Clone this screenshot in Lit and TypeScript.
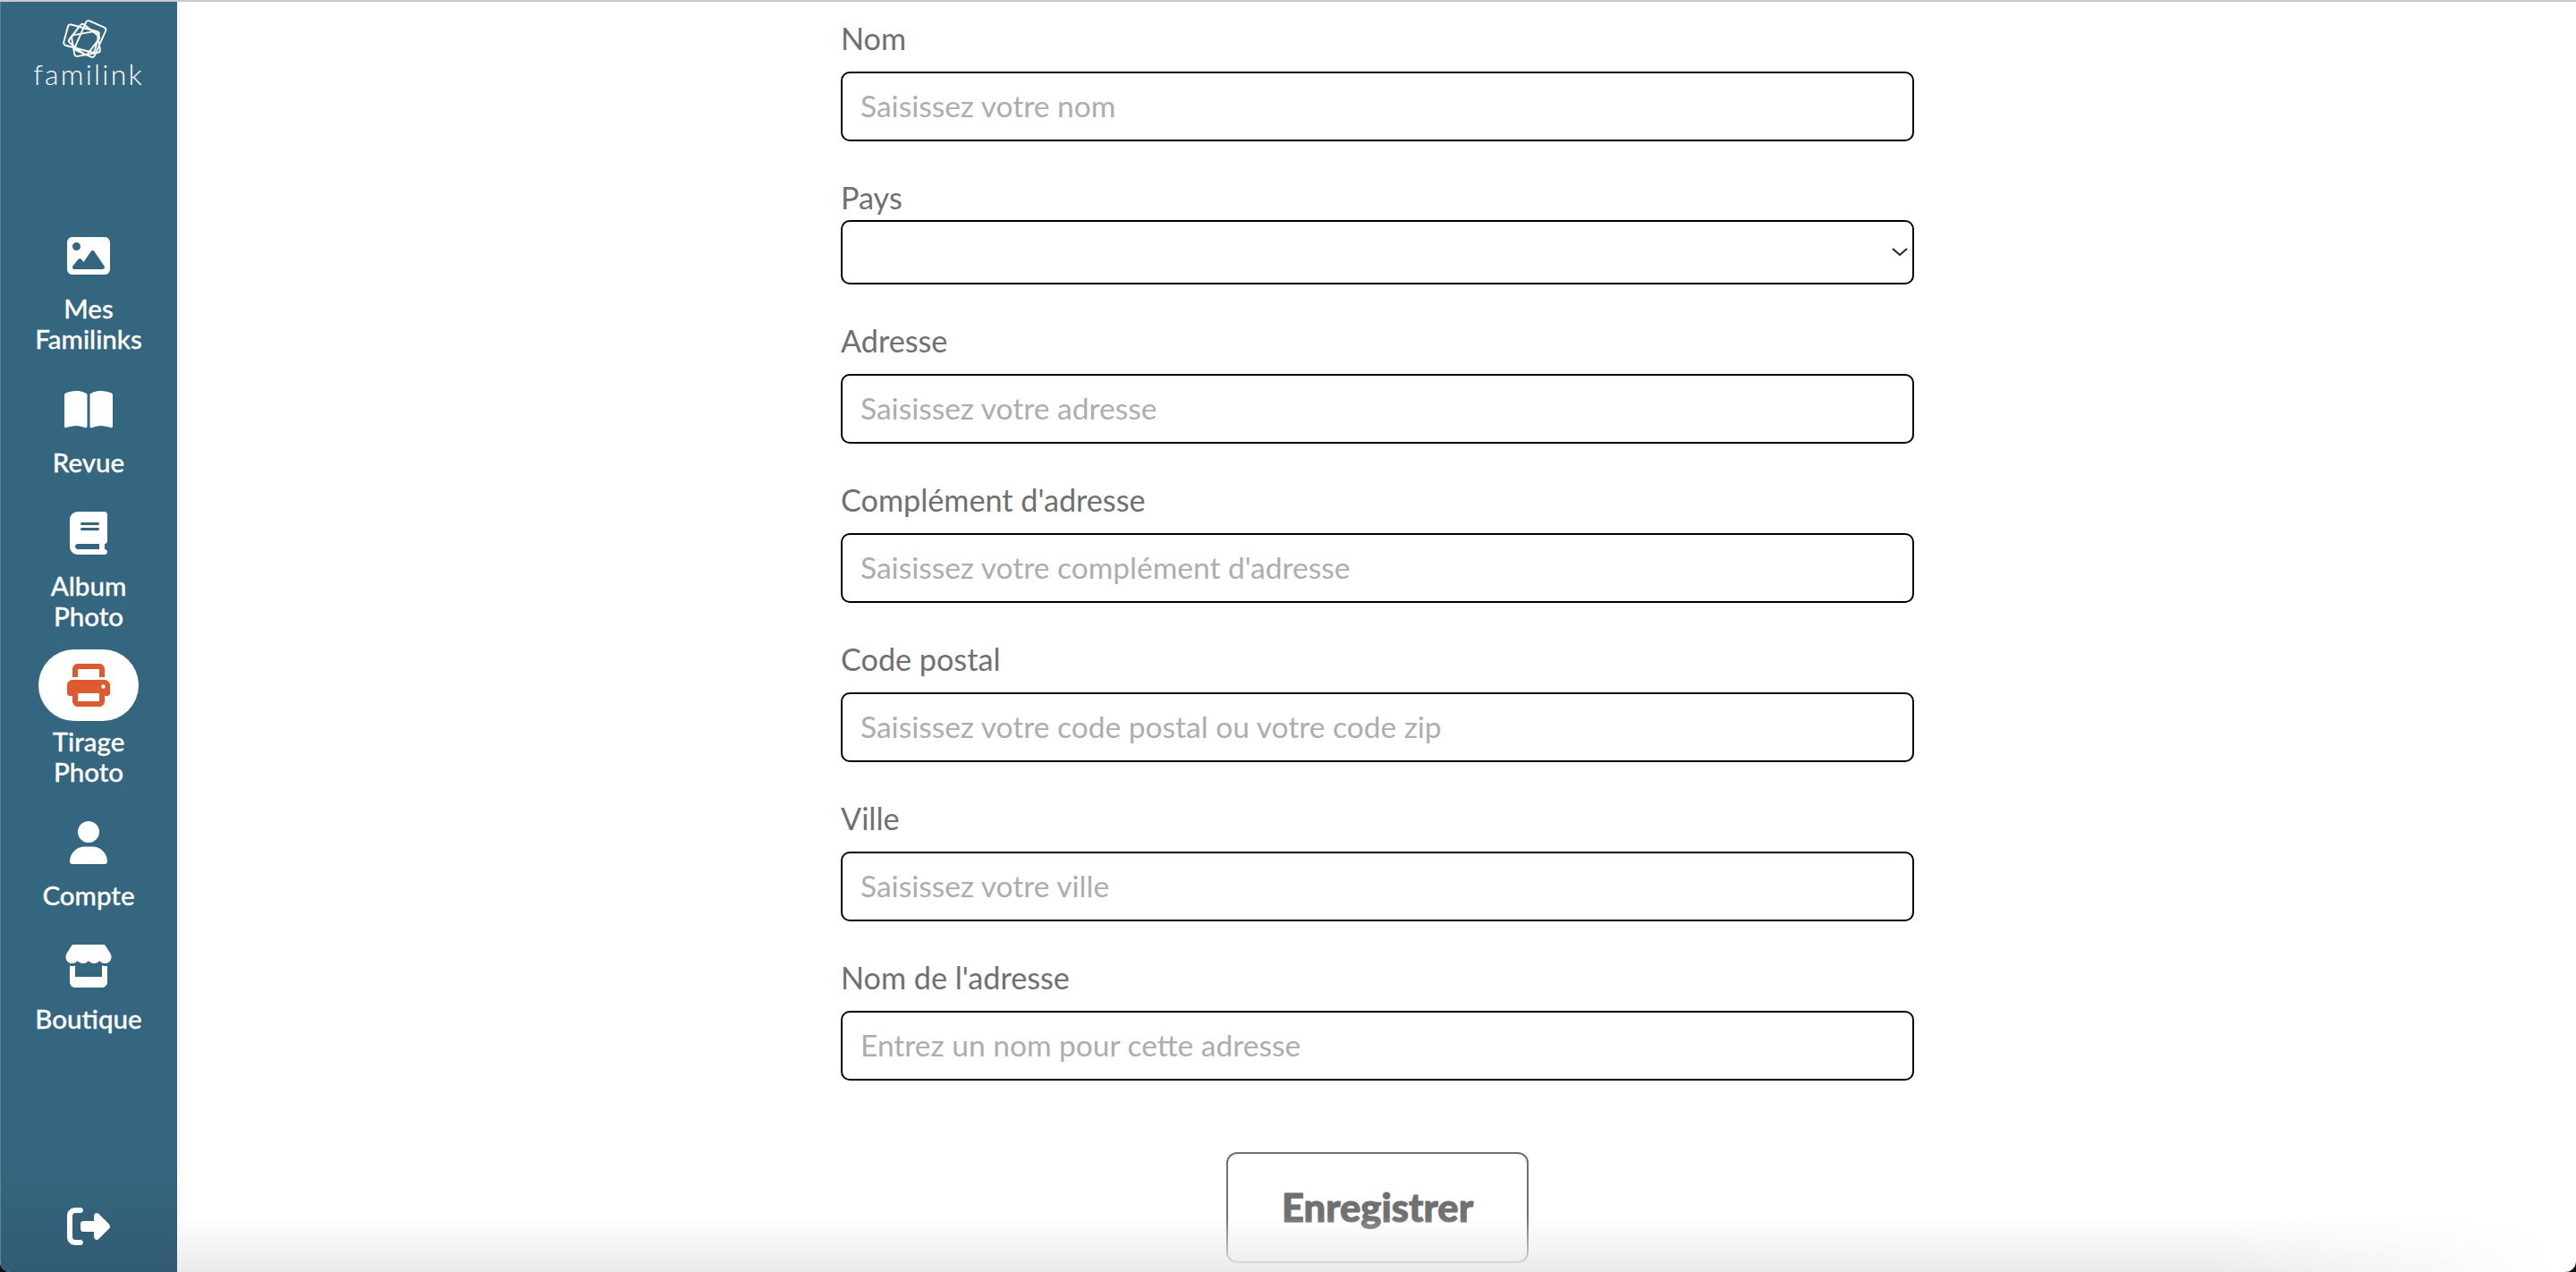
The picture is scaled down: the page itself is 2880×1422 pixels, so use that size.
import { LitElement, html, css, svg } from "lit";
import { customElement } from "lit/decorators.js";

const ICONS: Record<string, [number, string]> = {
  image: [512, "M0 96C0 60.7 28.7 32 64 32H448c35.3 0 64 28.7 64 64V416c0 35.3-28.7 64-64 64H64c-35.3 0-64-28.7-64-64V96zM323.8 202.5c-4.5-6.6-11.9-10.5-19.8-10.5s-15.4 3.9-19.8 10.5l-87 127.6L170.7 297c-4.6-5.7-11.5-9-18.7-9s-14.2 3.3-18.7 9l-64 80c-5.8 7.2-6.9 17.1-2.9 25.4s12.4 13.6 21.6 13.6h96 32H424c8.9 0 17.1-4.9 21.2-12.8s3.6-17.4-1.4-24.7l-120-176zM112 192a48 48 0 1 0 0-96 48 48 0 1 0 0 96z"],
  bookOpen: [576, "M249.6 471.5c10.8 3.8 22.4-4.1 22.4-15.5V78.6c0-4.2-1.6-8.4-5-11C247.4 52 202.4 32 144 32C93.5 32 46.3 45.3 18.1 56.1C6.8 60.5 0 71.7 0 83.8V454.1c0 11.9 12.8 20.2 24.1 16.5C55.6 460.1 105.5 448 144 448c33.9 0 79 14 105.6 23.5zm76.8 0C353 462 398.1 448 432 448c38.5 0 88.4 12.1 119.9 22.6c11.3 3.8 24.1-4.6 24.1-16.5V83.8c0-12.1-6.8-23.3-18.1-27.6C529.7 45.3 482.5 32 432 32c-58.4 0-103.4 20-123 35.6c-3.3 2.6-5 6.8-5 11V456c0 11.4 11.7 19.3 22.4 15.5z"],
  book: [448, "M96 0C43 0 0 43 0 96V416c0 53 43 96 96 96H384h32c17.7 0 32-14.3 32-32s-14.3-32-32-32V384c17.7 0 32-14.3 32-32V32c0-17.7-14.3-32-32-32H384 96zm0 384H352v64H96c-17.7 0-32-14.3-32-32s14.3-32 32-32zm32-240c0-8.8 7.2-16 16-16H336c8.8 0 16 7.2 16 16s-7.2 16-16 16H144c-8.8 0-16-7.2-16-16zm16 48H336c8.8 0 16 7.2 16 16s-7.2 16-16 16H144c-8.8 0-16-7.2-16-16s7.2-16 16-16z"],
  print: [512, "M128 64H384V160h64V64c0-35.3-28.7-64-64-64H128C92.7 0 64 28.7 64 64v96h64V64zM384 352v32 64H128V384 368 352H384zm64 32h32c17.7 0 32-14.3 32-32V256c0-35.3-28.7-64-64-64H64c-35.3 0-64 28.7-64 64v96c0 17.7 14.3 32 32 32H64v64c0 35.3 28.7 64 64 64H384c35.3 0 64-28.7 64-64V384zM432 248a24 24 0 1 1 0 48 24 24 0 1 1 0-48z"],
  user: [448, "M224 256A128 128 0 1 0 224 0a128 128 0 1 0 0 256zm-45.7 48C79.8 304 0 383.8 0 482.3C0 498.7 13.3 512 29.7 512H418.3c16.4 0 29.7-13.3 29.7-29.7C448 383.8 368.2 304 269.7 304H178.3z"],
  store: [576, "M547.6 103.8L490.3 13.1C485.2 5 476.1 0 466.4 0H109.6C99.9 0 90.8 5 85.7 13.1L28.3 103.8c-29.6 46.8-3.4 111.9 51.9 119.4c4 .5 8.1 .8 12.1 .8c26.1 0 49.3-11.4 65.2-29c15.9 17.6 39.1 29 65.2 29c26.1 0 49.3-11.4 65.2-29c15.9 17.6 39.1 29 65.2 29c26.2 0 49.3-11.4 65.2-29c16 17.6 39.1 29 65.2 29c4.1 0 8.1-.3 12.1-.8c55.5-7.4 81.8-72.5 52.1-119.4zM499.7 254.9l-.1 0c-5.3 .7-10.7 1.1-16.2 1.1c-12.4 0-24.3-1.9-35.4-5.3V384H128V250.6c-11.2 3.5-23.2 5.4-35.6 5.4c-5.5 0-11-.4-16.3-1.1l-.1 0c-4.1-.6-8.1-1.3-12-2.3V384v64c0 35.3 28.7 64 64 64H448c35.3 0 64-28.7 64-64V384 252.6c-4 1-8 1.8-12.3 2.3z"],
  logout: [512, "M377.9 105.9L500.7 228.7c7.2 7.2 11.3 17.1 11.3 27.3s-4.1 20.1-11.3 27.3L377.9 406.1c-6.4 6.4-15 9.9-24 9.9c-18.7 0-33.9-15.2-33.9-33.9l0-62.1-128 0c-17.7 0-32-14.3-32-32l0-64c0-17.7 14.3-32 32-32l128 0 0-62.1c0-18.7 15.2-33.9 33.9-33.9c9 0 17.6 3.5 24 9.9zM160 96L96 96c-17.7 0-32 14.3-32 32l0 256c0 17.7 14.3 32 32 32l64 0c17.7 0 32 14.3 32 32s-14.3 32-32 32l-64 0c-53 0-96-43-96-96L0 128C0 75 43 32 96 32l64 0c17.7 0 32 14.3 32 32s-14.3 32-32 32z"],
};

const icon = (name: string, width: number) => {
  const [vb, d] = ICONS[name];
  return html`<svg class="ic" style="width:${width}px" viewBox="0 0 ${vb} 512" fill="currentColor"><path d=${d}></path></svg>`;
};

const NAV = [
  { id: "a", ic: "image", w: 48, label: ["Mes", "Familinks"] },
  { id: "b", ic: "bookOpen", w: 54, label: ["Revue"] },
  { id: "c", ic: "book", w: 42, label: ["Album", "Photo"] },
  { id: "d", ic: "print", w: 48, label: ["Tirage", "Photo"] },
  { id: "e", ic: "user", w: 42, label: ["Compte"] },
  { id: "f", ic: "store", w: 54, label: ["Boutique"] },
];

const FIELDS = [
  { label: "Nom", ph: "Saisissez votre nom" },
  { label: "Pays", select: true },
  { label: "Adresse", ph: "Saisissez votre adresse" },
  { label: "Complément d'adresse", ph: "Saisissez votre complément d'adresse" },
  { label: "Code postal", ph: "Saisissez votre code postal ou votre code zip" },
  { label: "Ville", ph: "Saisissez votre ville" },
  { label: "Nom de l'adresse", ph: "Entrez un nom pour cette adresse" },
];

@customElement("app-root")
export class AppRoot extends LitElement {
  static styles = css`
    :host { display: block; width: 2880px; height: 1422px; overflow: hidden; position: relative; background: #111; font-family: "Lato", "Noto Sans", sans-serif; }
    .page { display: flex; height: 1422px; box-sizing: border-box; border-top: 2px solid #cbcbcb; background: #fff; border-radius: 0 0 12px 12px; overflow: hidden; }
    .side { width: 198px; flex: none; background: linear-gradient(#35667f 92%, #315b73); border-left: 1px solid #5a8196; padding-right: 1px; box-sizing: border-box; color: #fff; display: flex; flex-direction: column; align-items: center; }
    .logo { display: flex; flex-direction: column; align-items: center; height: 260px; flex: none; padding-top: 20px; box-sizing: border-box; }
    .logo svg { width: 50px; height: 43px; display: block; margin-right: 11px; overflow: visible; }
    .brand { font-size: 32px; font-weight: 300; letter-spacing: 2.2px; line-height: 30px; margin-top: 3px; }
    .nav { display: flex; flex-direction: column; align-items: center; width: 100%; }
    .item { display: flex; flex-direction: column; align-items: center; width: 100%; margin-top: 38px; }
    .ic { display: block; height: 48px; flex: none; }
    .iw { height: 48px; display: flex; align-items: center; justify-content: center; }
    .txt { font-size: 29.5px; font-weight: 500; line-height: 34px; text-align: center; margin-top: 18px; -webkit-text-stroke: 0.3px #fff; }
    .item.a { margin-top: 0; }
    .item.d { margin-top: 20px; }
    .item.d .iw { width: 112px; height: 80px; border-radius: 40px; background: #fff; color: #dd5a2f; }
    .item.d .txt { margin-top: 6px; }
    .out { margin-top: auto; margin-bottom: 27px; }
    .main { flex: 1; display: flex; justify-content: center; padding-left: 2px; }
    .form { width: 1200px; display: flex; flex-direction: column; padding-top: 22px; }
    .field { display: flex; flex-direction: column; }
    .label { font-size: 34.2px; line-height: 37px; color: #707070; height: 56px; }
    .input { height: 78px; box-sizing: border-box; border: 2px solid #000; border-radius: 10px; padding: 0 0 3px 20px; display: flex; align-items: center; font-size: 33.5px; color: #adadad; margin-bottom: 44px; }
    .sel { height: 72px; margin-top: -12px; margin-bottom: 44px; position: relative; }
    .chev { position: absolute; right: 5px; top: 29px; width: 18px; height: 10px; }
    .actions { display: flex; justify-content: center; margin-top: 36px; }
    .btn { width: 338px; height: 124px; box-sizing: border-box; border: 2px solid #707070; border-radius: 12px; padding-bottom: 2px; display: flex; align-items: center; justify-content: center; font-size: 43.5px; font-weight: 900; color: #707070; -webkit-text-stroke: 1px #707070; }
    .fade { position: absolute; left: 198px; right: 0; bottom: 0; height: 62px; background: linear-gradient(rgba(235,235,235,0), #ebebeb); -webkit-mask-image: linear-gradient(to right, #000 85%, transparent 99%); mask-image: linear-gradient(to right, #000 85%, transparent 99%); pointer-events: none; }
  `;

  render() {
    return html`
      <div class="page">
        <aside class="side">
          <div class="logo">
            <svg viewBox="0 0 50 43" fill="none" stroke="#fff" stroke-width="1.9">
              ${svg`
                <rect x="4" y="9" width="36" height="24" rx="3" transform="rotate(15 22 21)"></rect>
                <rect x="20" y="3.5" width="24" height="36" rx="3" transform="rotate(24 32 21.5)"></rect>
                <rect x="12.5" y="15" width="29" height="24" rx="3" transform="rotate(-10 27 27)"></rect>
                <rect x="12" y="9" width="26" height="26" rx="3" transform="rotate(38 25 22)"></rect>
              `}
            </svg>
            <div class="brand">familink</div>
          </div>
          <nav class="nav">
            ${NAV.map(
              (n) => html`<div class="item ${n.id}">
                <div class="iw">${icon(n.ic, n.w)}</div>
                <div class="txt">${n.label.map((l) => html`<div>${l}</div>`)}</div>
              </div>`
            )}
          </nav>
          <div class="out">${icon("logout", 48)}</div>
        </aside>
        <main class="main">
          <div class="form">
            ${FIELDS.map((f) =>
              f.select
                ? html`<div class="field"><div class="label">${f.label}</div>
                    <div class="input sel">
                      <svg class="chev" viewBox="0 0 18 10" fill="none" stroke="#222" stroke-width="2"><path d="M1 1l8 7 8-7"></path></svg>
                    </div></div>`
                : html`<div class="field"><div class="label">${f.label}</div><div class="input">${f.ph}</div></div>`
            )}
            <div class="actions"><div class="btn">Enregistrer</div></div>
          </div>
        </main>
      </div>
      <div class="fade"></div>
    `;
  }
}
